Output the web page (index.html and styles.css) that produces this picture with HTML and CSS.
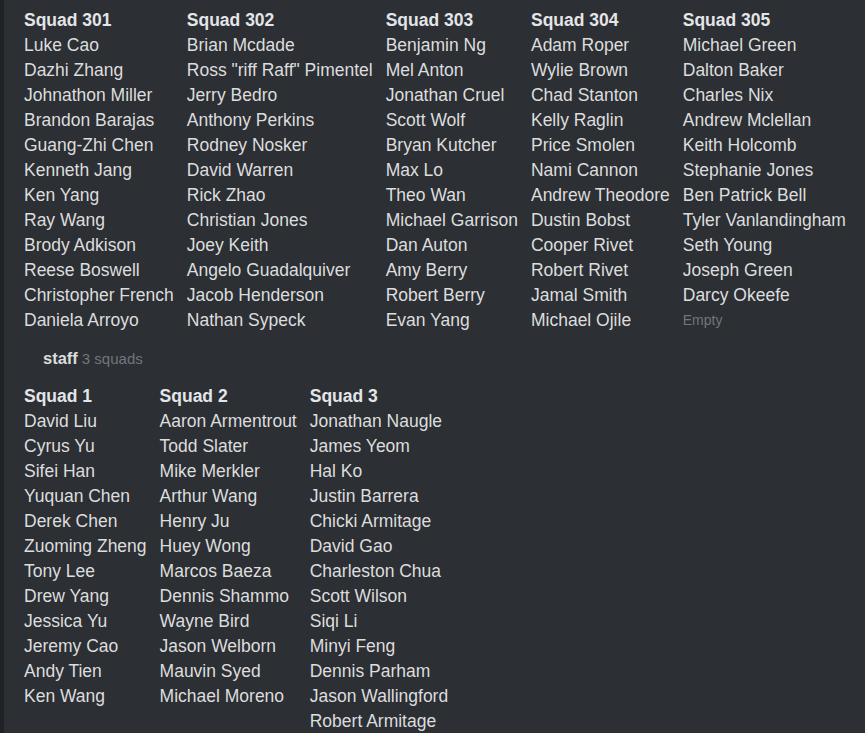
FILE: index.html
```html
<!DOCTYPE html>
<html>
<head>
<meta charset="utf-8">
<link rel="stylesheet" href="styles.css">
</head>
<body>
<div class="page">
  <div class="squads">
    <div class="col">
      <div class="head">Squad 301</div>
      <div>Luke Cao</div><div>Dazhi Zhang</div><div>Johnathon Miller</div><div>Brandon Barajas</div><div>Guang-Zhi Chen</div><div>Kenneth Jang</div><div>Ken Yang</div><div>Ray Wang</div><div>Brody Adkison</div><div>Reese Boswell</div><div>Christopher French</div><div>Daniela Arroyo</div>
    </div>
    <div class="col">
      <div class="head">Squad 302</div>
      <div>Brian Mcdade</div><div>Ross "riff Raff" Pimentel</div><div>Jerry Bedro</div><div>Anthony Perkins</div><div>Rodney Nosker</div><div>David Warren</div><div>Rick Zhao</div><div>Christian Jones</div><div>Joey Keith</div><div>Angelo Guadalquiver</div><div>Jacob Henderson</div><div>Nathan Sypeck</div>
    </div>
    <div class="col">
      <div class="head">Squad 303</div>
      <div>Benjamin Ng</div><div>Mel Anton</div><div>Jonathan Cruel</div><div>Scott Wolf</div><div>Bryan Kutcher</div><div>Max Lo</div><div>Theo Wan</div><div>Michael Garrison</div><div>Dan Auton</div><div>Amy Berry</div><div>Robert Berry</div><div>Evan Yang</div>
    </div>
    <div class="col">
      <div class="head">Squad 304</div>
      <div>Adam Roper</div><div>Wylie Brown</div><div>Chad Stanton</div><div>Kelly Raglin</div><div>Price Smolen</div><div>Nami Cannon</div><div>Andrew Theodore</div><div>Dustin Bobst</div><div>Cooper Rivet</div><div>Robert Rivet</div><div>Jamal Smith</div><div>Michael Ojile</div>
    </div>
    <div class="col">
      <div class="head">Squad 305</div>
      <div>Michael Green</div><div>Dalton Baker</div><div>Charles Nix</div><div>Andrew Mclellan</div><div>Keith Holcomb</div><div>Stephanie Jones</div><div>Ben Patrick Bell</div><div>Tyler Vanlandingham</div><div>Seth Young</div><div>Joseph Green</div><div>Darcy Okeefe</div><div class="empty">Empty</div>
    </div>
  </div>
  <div class="group"><span class="gname">staff</span> <span class="gcount">3 squads</span></div>
  <div class="squads">
    <div class="col">
      <div class="head">Squad 1</div>
      <div>David Liu</div><div>Cyrus Yu</div><div>Sifei Han</div><div>Yuquan Chen</div><div>Derek Chen</div><div>Zuoming Zheng</div><div>Tony Lee</div><div>Drew Yang</div><div>Jessica Yu</div><div>Jeremy Cao</div><div>Andy Tien</div><div>Ken Wang</div>
    </div>
    <div class="col">
      <div class="head">Squad 2</div>
      <div>Aaron Armentrout</div><div>Todd Slater</div><div>Mike Merkler</div><div>Arthur Wang</div><div>Henry Ju</div><div>Huey Wong</div><div>Marcos Baeza</div><div>Dennis Shammo</div><div>Wayne Bird</div><div>Jason Welborn</div><div>Mauvin Syed</div><div>Michael Moreno</div>
    </div>
    <div class="col">
      <div class="head">Squad 3</div>
      <div>Jonathan Naugle</div><div>James Yeom</div><div>Hal Ko</div><div>Justin Barrera</div><div>Chicki Armitage</div><div>David Gao</div><div>Charleston Chua</div><div>Scott Wilson</div><div>Siqi Li</div><div>Minyi Feng</div><div>Dennis Parham</div><div>Jason Wallingford</div><div>Robert Armitage</div>
    </div>
  </div>
</div>
</body>
</html>
```
FILE: styles.css
```css
html, body {
  margin: 0;
  padding: 0;
  background: #2c2f33;
  height: 100%;
}
body {
  font-family: "Liberation Sans", Arial, sans-serif;
  color: #dcddde;
  font-size: 17.5px;
  line-height: 25px;
  overflow: hidden;
}
.page {
  border-left: 4px solid #202225;
  min-height: 100%;
  box-sizing: border-box;
  padding: 8px 0 0 20px;
}
.squads {
  display: flex;
  gap: 13px;
}
.col {
  display: flex;
  flex-direction: column;
  white-space: nowrap;
  flex: none;
}
.head {
  font-weight: bold;
  color: #e3e5e8;
}
.empty {
  font-size: 14px;
  color: #72767d;
}
.group {
  display: flex;
  align-items: center;
  gap: 4px;
  height: 25px;
  margin: 13px 0;
  padding-left: 19px;
}
.gname {
  font-size: 16.5px;
  font-weight: bold;
  color: #dcddde;
}
.gcount {
  font-size: 15px;
  color: #72767d;
}
```
